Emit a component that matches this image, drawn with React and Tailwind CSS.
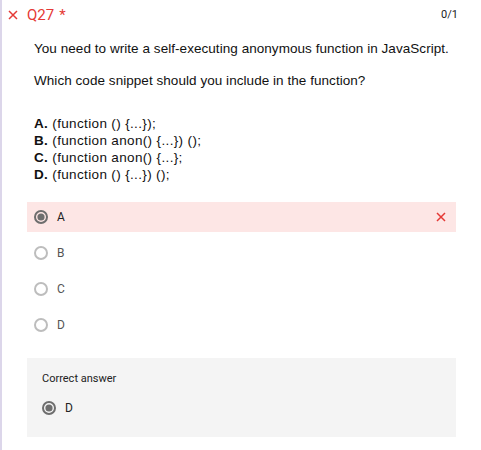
import React from "react";

function Radio({ checked }) {
  if (checked) {
    return (
      <svg width="14" height="14" viewBox="0 0 14 14" className="shrink-0">
        <circle cx="7" cy="7" r="6" fill="none" stroke="#6e6e6e" strokeWidth="2" />
        <circle cx="7" cy="7" r="3.6" fill="#6e6e6e" />
      </svg>
    );
  }
  return (
    <svg width="14" height="14" viewBox="0 0 14 14" className="shrink-0">
      <circle cx="7" cy="7" r="6" fill="none" stroke="#bdbdbd" strokeWidth="2" />
    </svg>
  );
}

function XIcon({ size = 10, color = "#e53935", sw = 1.6 }) {
  return (
    <svg width={size} height={size} viewBox="0 0 10 10">
      <path d="M1 1L9 9M9 1L1 9" stroke={color} strokeWidth={sw} fill="none" />
    </svg>
  );
}

export default function App() {
  const opts = [
    ["A.", "(function () {...});"],
    ["B.", "(function anon() {...}) ();"],
    ["C.", "(function anon() {...};"],
    ["D.", "(function () {...}) ();"],
  ];
  return (
    <div className="w-[481px] h-[450px] bg-white flex">
      <div className="w-[2px] bg-[#dcd6ea] shrink-0" />
      <div className="flex-1 flex flex-col">
        <div className="flex items-center h-[30px] pl-[6px] pr-[23px]" style={{ fontFamily: "Roboto, sans-serif" }}>
          <XIcon size={10} sw={1.5} />
          <span className="ml-[9px] text-[15px] text-[#e53935]">Q27</span>
          <span className="ml-[5px] text-[15px] text-[#e53935]">*</span>
          <span className="ml-auto text-[11px] text-[#222]">0/1</span>
        </div>
        <div className="pl-[32px] text-[#111]" style={{ fontFamily: '"Liberation Sans", Arial, sans-serif' }}>
          <p className="mt-[10px] leading-[17px] text-[13.5px] tracking-[0.05px]">You need to write a self-executing anonymous function in JavaScript.</p>
          <p className="mt-[15px] leading-[17px] text-[13.5px] tracking-[0.05px]">Which code snippet should you include in the function?</p>
          <div className="mt-[26px] leading-[17px] text-[13.5px] tracking-[0.35px]">
            {opts.map(([k, v]) => (
              <div key={k}>
                <span className="font-bold">{k}</span> {v}
              </div>
            ))}
          </div>
        </div>
        <div className="ml-[25px] w-[429px] mt-[19px]" style={{ fontFamily: "Roboto, sans-serif" }}>
          <div className="h-[30px] bg-[#fde6e5] flex items-center pl-[7px] pr-[10px]">
            <Radio checked />
            <span className="ml-[9px] text-[12px] text-[#222]">A</span>
            <span className="ml-auto flex"><XIcon size={10} sw={1.5} /></span>
          </div>
          <div className="h-[3px]" />
          {["B", "C", "D"].map((l) => (
            <div key={l} className="h-[36px] flex items-center pl-[7px]">
              <Radio />
              <span className="ml-[9px] text-[12px] text-[#555]">{l}</span>
            </div>
          ))}
          <div className="mt-[15px] h-[79px] bg-[#f4f4f4] pl-[15px] pt-[14px]">
            <div className="text-[11px] text-[#222] leading-[14px]">Correct answer</div>
            <div className="mt-[13px] flex items-center">
              <Radio checked />
              <span className="ml-[9px] text-[12px] text-[#222]">D</span>
            </div>
          </div>
        </div>
      </div>
    </div>
  );
}
